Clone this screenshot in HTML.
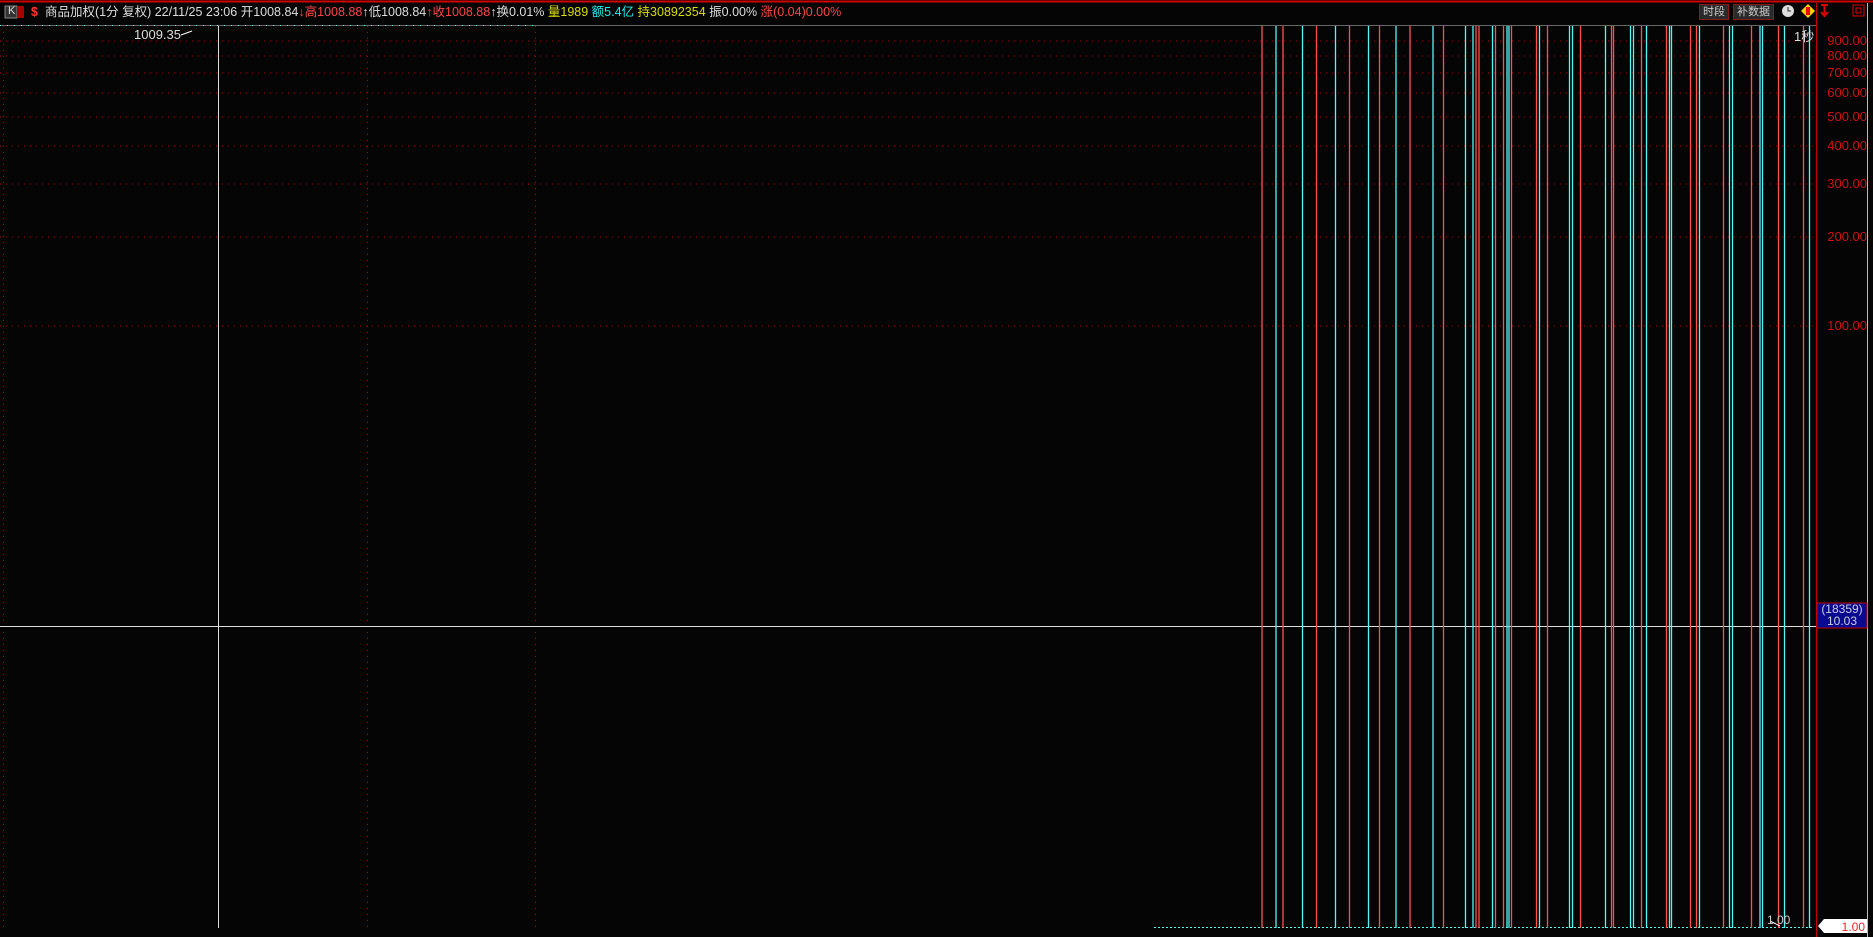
<!DOCTYPE html>
<html><head><meta charset="utf-8"><style>
html,body{margin:0;padding:0;background:#050505;width:1873px;height:937px;overflow:hidden}
body{font-family:"Liberation Sans","Noto Sans CJK SC",sans-serif;position:relative}
.t{position:absolute;top:4px;font-size:12.5px;white-space:nowrap;line-height:16px}
.ax{position:absolute;right:6px;font-size:13px;color:#d01010;text-align:right;line-height:13px}
.btn{position:absolute;top:4px;height:14px;border:1px solid #8a1a1a;background:#2a2a2a;color:#ccc;font-size:11px;line-height:14px;padding:0 3px}
</style></head><body>
<svg width="1873" height="937" style="position:absolute;left:0;top:0">
<line x1="0" y1="1.5" x2="1873" y2="1.5" stroke="#d00000" stroke-width="2"/>
<line x1="0" y1="25.5" x2="1816" y2="25.5" stroke="#666" stroke-width="1"/>
<line x1="0" y1="25.5" x2="535" y2="25.5" stroke="#5ff" stroke-width="1" stroke-dasharray="1 6"/>
<line x1="1816.5" y1="3" x2="1816.5" y2="937" stroke="#c00000"/>
<line x1="1867.5" y1="3" x2="1867.5" y2="937" stroke="#bbb"/>
<g stroke="#b00000" stroke-dasharray="1 5">
<line x1="0" y1="41" x2="1816" y2="41"/><line x1="0" y1="56" x2="1816" y2="56"/>
<line x1="0" y1="73" x2="1816" y2="73"/><line x1="0" y1="93" x2="1816" y2="93"/>
<line x1="0" y1="117" x2="1816" y2="117"/><line x1="0" y1="146" x2="1816" y2="146"/>
<line x1="0" y1="184" x2="1816" y2="184"/><line x1="0" y1="237" x2="1816" y2="237"/>
<line x1="0" y1="326" x2="1816" y2="326"/>
<line x1="3.5" y1="26" x2="3.5" y2="928"/><line x1="367.5" y1="26" x2="367.5" y2="928"/><line x1="535.5" y1="26" x2="535.5" y2="928"/>
</g>
<line x1="218.5" y1="26" x2="218.5" y2="928" stroke="#ddd"/>
<line x1="0" y1="626.5" x2="1816" y2="626.5" stroke="#ddd"/>
<line x1="1154" y1="927.5" x2="1812" y2="927.5" stroke="#5ff" stroke-dasharray="2 2"/>
<polyline points="181,35 192,31" stroke="#fff" fill="none"/>
<g stroke-width="1.3">
<g stroke="#ff5050">
<line x1="1262" y1="26" x2="1262" y2="928"/><line x1="1283" y1="26" x2="1283" y2="928"/><line x1="1316.5" y1="26" x2="1316.5" y2="928"/>
<line x1="1349.5" y1="26" x2="1349.5" y2="928"/><line x1="1379.5" y1="26" x2="1379.5" y2="928"/><line x1="1410" y1="26" x2="1410" y2="928"/>
<line x1="1443.5" y1="26" x2="1443.5" y2="928"/><line x1="1476" y1="26" x2="1476" y2="928"/><line x1="1479" y1="26" x2="1479" y2="928"/>
<line x1="1495.5" y1="26" x2="1495.5" y2="928"/><line x1="1503.5" y1="26" x2="1503.5" y2="928"/><line x1="1511.5" y1="26" x2="1511.5" y2="928"/>
<line x1="1536.5" y1="26" x2="1536.5" y2="928"/><line x1="1547.5" y1="26" x2="1547.5" y2="928"/><line x1="1580.5" y1="26" x2="1580.5" y2="928"/>
<line x1="1611.5" y1="26" x2="1611.5" y2="928"/><line x1="1613.5" y1="26" x2="1613.5" y2="928"/><line x1="1641.5" y1="26" x2="1641.5" y2="928"/>
<line x1="1666.5" y1="26" x2="1666.5" y2="928"/><line x1="1690.5" y1="26" x2="1690.5" y2="928"/><line x1="1696.5" y1="26" x2="1696.5" y2="928"/>
<line x1="1723.5" y1="26" x2="1723.5" y2="928"/><line x1="1751.5" y1="26" x2="1751.5" y2="928"/><line x1="1778.5" y1="26" x2="1778.5" y2="928"/>
<line x1="1803.5" y1="26" x2="1803.5" y2="928"/>
</g>
<g stroke="#55f5f5">
<line x1="1276" y1="26" x2="1276" y2="928"/><line x1="1302.5" y1="26" x2="1302.5" y2="928"/><line x1="1335.5" y1="26" x2="1335.5" y2="928"/>
<line x1="1368.5" y1="26" x2="1368.5" y2="928"/><line x1="1396" y1="26" x2="1396" y2="928"/><line x1="1433" y1="26" x2="1433" y2="928"/>
<line x1="1465.5" y1="26" x2="1465.5" y2="928"/><line x1="1473" y1="26" x2="1473" y2="928"/><line x1="1492.5" y1="26" x2="1492.5" y2="928"/>
<line x1="1507" y1="26" x2="1507" y2="928"/><line x1="1509" y1="26" x2="1509" y2="928"/><line x1="1539.5" y1="26" x2="1539.5" y2="928"/>
<line x1="1569.5" y1="26" x2="1569.5" y2="928"/><line x1="1572.5" y1="26" x2="1572.5" y2="928"/><line x1="1605.5" y1="26" x2="1605.5" y2="928"/>
<line x1="1630.5" y1="26" x2="1630.5" y2="928"/><line x1="1633.5" y1="26" x2="1633.5" y2="928"/><line x1="1646.5" y1="26" x2="1646.5" y2="928"/>
<line x1="1669.5" y1="26" x2="1669.5" y2="928"/><line x1="1671.5" y1="26" x2="1671.5" y2="928"/><line x1="1699.5" y1="26" x2="1699.5" y2="928"/>
<line x1="1729.5" y1="26" x2="1729.5" y2="928"/><line x1="1732.5" y1="26" x2="1732.5" y2="928"/><line x1="1760" y1="26" x2="1760" y2="928"/>
<line x1="1762.5" y1="26" x2="1762.5" y2="928"/><line x1="1784.5" y1="26" x2="1784.5" y2="928"/><line x1="1809.5" y1="26" x2="1809.5" y2="928"/>
</g></g>
<line x1="1770" y1="921" x2="1780" y2="926" stroke="#fff"/>
<rect x="1817" y="603" width="50" height="25" fill="#0a0a90" stroke="#c00000"/>
<polygon points="1818,926 1824,919 1867,919 1867,933 1824,933" fill="#fff"/>
<rect x="5" y="6" width="12" height="12" fill="#333" stroke="#888"/>
<rect x="17" y="6" width="7" height="12" fill="#a00"/>
<circle cx="1788" cy="11" r="6" fill="#ddd"/><path d="M1788 7v4h3" stroke="#333" fill="none"/>
<polygon points="1808,4 1815,11 1808,18 1801,11" fill="#ffd000"/><rect x="1806" y="7" width="4" height="8" fill="#e00"/>
<path d="M1821 5h7M1824.5 5v10M1821 12l3.5 4 3.5-4" stroke="#d00" stroke-width="2" fill="none"/>
<rect x="1853" y="5" width="11" height="11" fill="none" stroke="#d00"/><rect x="1856" y="8" width="5" height="5" fill="none" stroke="#d00"/>
</svg>
<div class="t" style="left:8px;color:#ddd;font-size:11px;top:3px">K</div>
<div class="t" style="left:31px;color:#f33;font-weight:bold">$</div>
<div class="t" style="left:45px;color:#ddd">商品加权(1分 复权) 22/11/25 23:06 <span>开1008.84</span><span style="color:#f44">↓高1008.88</span><span style="color:#ddd">↑低1008.84</span><span style="color:#f44">↑收1008.88</span><span style="color:#ddd">↑换0.01%</span> <span style="color:#dd0">量1989</span> <span style="color:#2ee">额5.4亿</span> <span style="color:#dd0">持30892354</span> <span>振0.00%</span> <span style="color:#f44">涨(0.04)0.00%</span></div>
<div class="btn" style="left:1699px">时段</div>
<div class="btn" style="left:1733px">补数据</div>
<div style="position:absolute;left:134px;top:27px;color:#ddd;font-size:13px">1009.35</div>
<div style="position:absolute;left:1794px;top:26px;color:#ddd;font-size:13px">1秒</div>
<div class="ax" style="top:34px">900.00</div><div class="ax" style="top:49px">800.00</div>
<div class="ax" style="top:66px">700.00</div><div class="ax" style="top:86px">600.00</div>
<div class="ax" style="top:110px">500.00</div><div class="ax" style="top:139px">400.00</div>
<div class="ax" style="top:177px">300.00</div><div class="ax" style="top:230px">200.00</div>
<div class="ax" style="top:319px">100.00</div>
<div style="position:absolute;left:1818px;top:603px;width:48px;text-align:center;color:#ccd;font-size:12px;line-height:12px">(18359)<br>10.03</div>
<div style="position:absolute;left:1767px;top:913px;color:#ccc;font-size:12px">1.00</div>
<div style="position:absolute;right:8px;top:920px;color:#f22;font-size:12px">1.00</div>
</body></html>
